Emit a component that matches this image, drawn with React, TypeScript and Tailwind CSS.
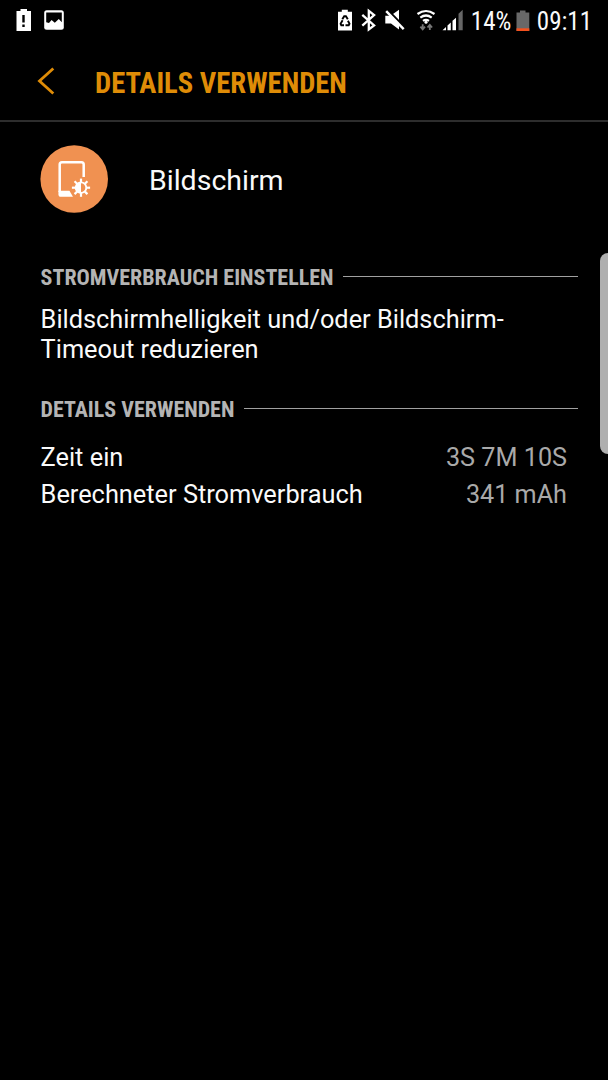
import type { ReactNode } from 'react';

const DETAILS = [
  { label: 'Zeit ein', value: '3S 7M 10S' },
  { label: 'Berechneter Stromverbrauch', value: '341 mAh' },
];

const TEETH = [0, 45, 90, 135, 180, 225, 270, 315];

function LeftStatusIcons() {
  return (
    <svg width="70" height="42" viewBox="0 0 70 42" fill="#fff">
      <path d="M20.500 9h6.500v2H31v20H16.500V11h4z" />
      <path d="M22.300 15h2.400v7.500h-2.400zM22.300 24.500h2.400v2.500h-2.400z" fill="#000" />
      <rect x="44.200" y="10.300" width="19.600" height="19.500" rx="2.500" />
      <path d="M46.200 12.500h15.600v9.800l-3-3.300-4 3.800-3.200-2.800-2.600 3-2.800-.8z" fill="#000" />
    </svg>
  );
}

function RightStatusIcons() {
  return (
    <svg width="130" height="42" viewBox="335 0 130 42" fill="#fff">
      <path d="M341.800 9.800h6v2h4.200v18.700h-14V11.800h3.800z" />
      <g fill="none" stroke="#000" strokeWidth="1.900">
        <path d="m342.300 19.300 1.900-3.100h1.700l1.900 3.100" />
        <path d="m342.600 20.300-2 3.400.7 1.500h2.700" />
        <path d="m347.900 20.800 1.600 2.900-.8 1.500h-3.200" />
      </g>
      <path d="m362.300 14.800 11.800 10.600-5.300 4.100V10.900l5.300 4.100-11.800 10.600" fill="none" stroke="#fff" strokeWidth="2.300" />
      <path d="M385.300 15.800h5.200l8.500-6v19.700l-8-6h-5.700z" />
      <path d="m387.500 9.800 17 17.500" stroke="#000" strokeWidth="2.400" />
      <path d="m386.200 11.200 17.500 18" stroke="#fff" strokeWidth="2.400" />
      <g fill="none" stroke="#fff" strokeWidth="2.200">
        <path d="M417.500 14q8.500-6 17 0" />
        <path d="M420.300 17.600q5.700-4.200 11.400 0" />
        <path d="M423 20.900q3-2.200 6 0" />
      </g>
      <circle cx="426" cy="22.300" r="1.500" />
      <path d="M422.700 24.200v4.800m-2.300-2.300 2.300 2.600 2.300-2.600M429.800 30v-4.800m-2.300 2.300 2.300-2.600 2.300 2.600" fill="none" stroke="#777" strokeWidth="1.800" />
      <path d="M442.500 30.300 446 27v3.300zM447.500 25.500l3.300-3v7.800h-3.300zM452.500 20.800l3.500-3v12.500h-3.500z" />
      <path d="m458.500 13.800 4.200-4v20.500h-4.200z" fill="#666" />
    </svg>
  );
}

function BatteryIcon() {
  return (
    <svg width="14" height="22" viewBox="0 0 14 22">
      <path d="M4 .5h5.500v2h3.800V21H.5V2.500H4z" fill="#686868" />
      <path d="M.5 18.300h12.800V21H.5z" fill="#f4511e" />
    </svg>
  );
}

function ScreenIcon() {
  return (
    <svg width="68" height="68" viewBox="40 145 68 68">
      <circle cx="74.200" cy="179" r="33.800" fill="#f09151" />
      <path d="M83.700 177v-12.500q0-2.300-2.300-2.300H62q-2.300 0-2.300 2.300V192" fill="none" stroke="#fff" strokeWidth="2.500" />
      <path d="M58.450 190.800h11l3.500 6H61q-2.550 0-2.550-2.600z" fill="#fff" />
      <g stroke="#fff" strokeWidth="2.200">
        {TEETH.map((deg) => (
          <path key={deg} d="M81 182.500v-3.900" transform={`rotate(${deg} 81 187.700)`} />
        ))}
      </g>
      <circle cx="81" cy="187.700" r="5.300" fill="none" stroke="#fff" strokeWidth="1.900" />
      <path d="M81 182.500a5.200 5.200 0 0 0 0 10.400z" fill="#fff" />
    </svg>
  );
}

function Section({ title, children }: { title: string; children: ReactNode }) {
  return (
    <section>
      <div className="flex h-6 items-center">
        <h2 className="pt-0.5 font-['Roboto_Condensed','Roboto',sans-serif] text-[22px] leading-6 font-bold whitespace-nowrap text-[#b4b4b4] [font-stretch:75%]">
          {title}
        </h2>
        <span className="mb-0.5 ml-2.5 h-px flex-1 bg-[#a0a0a0]" />
      </div>
      {children}
    </section>
  );
}

export default function App() {
  return (
    <div className="relative h-[1080px] w-[608px] overflow-hidden bg-black font-['Roboto',sans-serif] text-[#fafafa]">
      <div className="flex h-[42px] items-center font-['Roboto_Condensed','Roboto',sans-serif] text-[25px] [font-stretch:75%]">
        <LeftStatusIcons />
        <div className="ml-auto flex items-center pr-4">
          <RightStatusIcons />
          <span className="ml-1.5 w-[45px] pt-0.5">14%</span>
          <BatteryIcon />
          <span className="ml-[7px] pt-0.5">09:11</span>
        </div>
      </div>

      <header className="flex h-20 items-center border-b-2 border-[#2d2d2d] pl-[37px]">
        <svg width="18" height="28" viewBox="0 0 18 28" fill="none" stroke="#df8c07" strokeWidth="2.800">
          <path d="M16.300 1.500 2.500 14l13.800 12.500" />
        </svg>
        <h1 className="ml-10 pt-1 font-['Roboto_Condensed','Roboto',sans-serif] text-[28.600px] font-bold text-[#df8c07] [font-stretch:75%]">
          DETAILS VERWENDEN
        </h1>
      </header>

      <main className="px-[30px] pl-10">
        <div className="flex h-[143px] items-start pt-[23px]">
          <ScreenIcon />
          <span className="ml-[41px] pt-px text-[28.500px] leading-[70px]">Bildschirm</span>
        </div>

        <div className="pl-[0.600px]">
          <Section title="STROMVERBRAUCH EINSTELLEN">
            <p className="mt-[15px] pb-[33px] text-[25.350px] leading-[30px]">
              Bildschirmhelligkeit und/oder Bildschirm-
              <br />
              Timeout reduzieren
            </p>
          </Section>

          <Section title="DETAILS VERWENDEN">
            <dl className="mt-[18px] pr-[11px] text-[25.350px] leading-[37px]">
              {DETAILS.map(({ label, value }) => (
                <div key={label} className="flex justify-between">
                  <dt>{label}</dt>
                  <dd className="text-[25.200px] text-[#a9a9a9]">{value}</dd>
                </div>
              ))}
            </dl>
          </Section>
        </div>
      </main>

      {/* edge panel handle */}
      <div className="absolute top-[253px] right-0 h-[201px] w-2 rounded-l-lg bg-[#afafaf]" />
    </div>
  );
}
